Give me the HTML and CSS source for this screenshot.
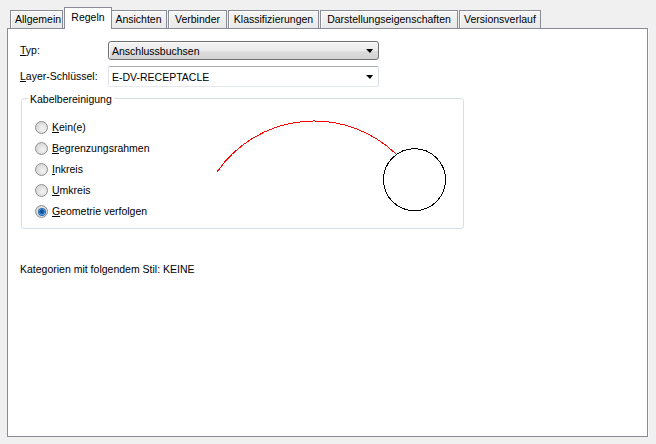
FILE: index.html
```html
<!DOCTYPE html>
<html>
<head>
    <title>Eigenschaften - Regeln</title>
<link rel="stylesheet" href="styles.css">
</head>

<body>

    <div class="tabs">
        <div class="tab tab-allgemein">Allgemein</div>
        <div class="tab tab-active">Regeln</div>
        <div class="tab tab-ansichten">Ansichten</div>
        <div class="tab tab-verbinder">Verbinder</div>
        <div class="tab tab-klass">Klassifizierungen</div>
        <div class="tab tab-darst">Darstellungseigenschaften</div>
        <div class="tab tab-version">Versionsverlauf</div>
    </div>

    <div class="panel">
        <div class="field-row">
            <label class="field-label"><u>T</u>yp:</label>
            <div class="combo combo-button">
                <span>Anschlussbuchsen</span>
                <span class="arrow"></span>
            </div>
        </div>
        <div class="field-row">
            <label class="field-label"><u>L</u>ayer-Schlüssel:</label>
            <div class="combo combo-edit">
                <span>E-DV-RECEPTACLE</span>
                <span class="arrow"></span>
            </div>
        </div>

        <fieldset class="group">
            <legend>Kabelbereinigung</legend>
            <div class="group-body">
                <ul class="radio-list">
                    <li><span class="radio"></span><span><u>K</u>ein(e)</span></li>
                    <li><span class="radio"></span><span><u>B</u>egrenzungsrahmen</span></li>
                    <li><span class="radio"></span><span><u>I</u>nkreis</span></li>
                    <li><span class="radio"></span><span><u>U</u>mkreis</span></li>
                    <li><span class="radio radio-checked"></span><span><u>G</u>eometrie verfolgen</span></li>
                </ul>
                <!-- preview of the cleanup mode -->
                <svg class="preview" width="250" height="100" viewBox="0 0 250 100">
                    <path d="M8 55 A118 118 0 0 1 187 37" fill="none" stroke="#ff0000" stroke-width="1" shape-rendering="crispEdges"/>
                    <circle cx="205.5" cy="62.7" r="31" fill="none" stroke="#000000" stroke-width="1" shape-rendering="crispEdges"/>
                </svg>
            </div>
        </fieldset>

        <p class="categories">Kategorien mit folgendem Stil: KEINE</p>
    </div>

</body>
</html>
```

FILE: styles.css
```css
/* General */
body {
    font-family: 'Liberation Sans', Arial, sans-serif;
    font-size: 10.5px;
    line-height: 13px;
    background-color: #f0f0f0;
    color: #000;
    margin: 0;
    padding: 0 0 0 7px;
}

/* Tab strip */
.tabs {
    display: flex;
    align-items: flex-end;
    height: 28px;
    padding-left: 3px;
    box-sizing: border-box;
}

.tab {
    height: 18px;
    box-sizing: border-box;
    padding: 2px 4px 0;
    border: 1px solid #898c95;
    border-bottom: none;
    background: linear-gradient(#f6f6f6, #e8e8e8);
    box-shadow: inset 1px 1px 0 #ffffff;
    white-space: nowrap;
    text-align: center;
}

.tab + .tab {
    margin-left: 1px;
}

.tab-allgemein { width: 53px; }
.tab-ansichten { width: 57px; }
.tab-verbinder { width: 59px; }
.tab-klass { width: 91px; }
.tab-darst { width: 138px; }
.tab-version { width: 82px; }

.tab-active {
    position: relative;
    z-index: 1;
    width: 48px;
    height: 22px;
    padding-top: 3px;
    margin: 0 -2px -1px -1px;
    background: #ffffff;
    box-shadow: none;
}

.tab-active + .tab {
    margin-left: 0;
}

/* Page panel */
.panel {
    width: 641px;
    height: 409px;
    box-sizing: border-box;
    padding: 12px 12px;
    background: #ffffff;
    border: 1px solid #898c95;
    box-shadow: 1px 1px 0 #fafafa;
}

.field-row {
    display: flex;
    align-items: center;
}

.field-row + .field-row {
    margin-top: 6px;
}

.field-label {
    width: 88px;
}

.combo {
    display: flex;
    align-items: center;
    width: 271px;
    box-sizing: border-box;
    padding-left: 3px;
    padding-top: 1px;
}

.combo-button {
    height: 19px;
    border: 1px solid #707070;
    border-radius: 3px;
    background: linear-gradient(#f3f3f3 0%, #ebebeb 50%, #dedede 51%, #d2d2d2 100%);
    box-shadow: inset 1px 1px 0 #fcfcfc;
}

.combo-edit {
    height: 21px;
    border: 1px solid;
    border-color: #abadb3 #dbdfe6 #e3e9ef #e2e3ea;
    border-radius: 2px;
    background: #ffffff;
}

.arrow {
    width: 0;
    height: 0;
    margin-left: auto;
    margin-right: 5px;
    border-left: 4px solid transparent;
    border-right: 3px solid transparent;
    border-top: 4px solid #000000;
}

/* Group box */
.group {
    width: 443px;
    box-sizing: border-box;
    margin: 4px 0 0 1px;
    padding: 0 4px 6px;
    min-width: 0;
    border: 1px solid #d5dfe5;
    border-radius: 3px;
}

.group legend {
    margin-left: 2px;
    padding: 2px 2px 0;
    line-height: 13px;
}

.group-body {
    display: flex;
    align-items: flex-start;
    padding-top: 11px;
}

.radio-list {
    list-style: none;
    margin: 0 0 0 9px;
    padding: 0;
    width: 175px;
}

.radio-list li {
    display: flex;
    align-items: center;
    height: 21px;
    gap: 4px;
}

.radio {
    width: 13px;
    height: 13px;
    box-sizing: border-box;
    border: 1px solid #8f8f8f;
    border-radius: 50%;
    background: radial-gradient(circle at 60% 60%, #f4f4f4 0%, #e2e2e2 45%, #cdcdcd 100%);
    display: flex;
    align-items: center;
    justify-content: center;
}

.radio-checked::after {
    content: "";
    width: 6px;
    height: 6px;
    border-radius: 50%;
    background: radial-gradient(circle at 45% 40%, #0b3f80 0%, #1c67b8 45%, #6bbcf0 100%);
    box-shadow: 0 0 0 1px #2a6fb5;
}

.preview {
    display: block;
    flex: none;
}

.categories {
    margin: 34px 0 0;
}
```
